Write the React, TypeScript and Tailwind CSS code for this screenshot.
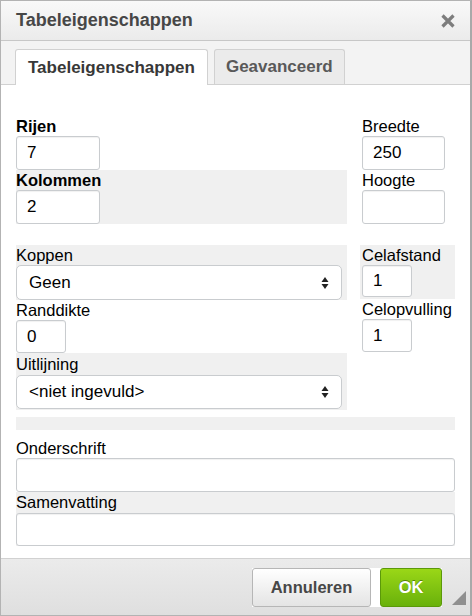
import { FC } from "react";

const Label: FC<{ text: string; bold?: boolean; className?: string }> = ({
  text,
  bold,
  className = "h-[20px] leading-[20px]",
}) => (
  <div className={`${className} text-[16.5px] text-black ${bold ? "font-bold" : ""}`}>
    {text}
  </div>
);

const TextBox: FC<{ value?: string; className: string }> = ({ value = "", className }) => (
  <input
    readOnly
    value={value}
    className={`${className} block rounded-[3px] border border-[#c9cccf] bg-white pl-[10px] text-[17px] text-black shadow-[inset_0_1px_1px_rgba(0,0,0,0.06)] outline-none`}
  />
);

const SelectBox: FC<{ value: string; className: string }> = ({ value, className }) => (
  <div
    className={`${className} flex w-[326px] items-center justify-between rounded-[5px] border border-[#c9cccf] bg-white pl-[12px] pr-[12px] text-[17px] text-black`}
  >
    <span>{value}</span>
    <svg width="8" height="14" viewBox="0 0 8 14">
      <polygon points="4,1 7.5,6 0.5,6" fill="#222" />
      <polygon points="0.5,8 7.5,8 4,13" fill="#222" />
    </svg>
  </div>
);

export default function App() {
  return (
    <div className="flex h-[616px] w-[472px] flex-col border border-[#b3b3b3] border-r-2 border-r-[#a9a9a9] bg-white font-['Liberation_Sans',Arial,sans-serif]">
      {/* title bar */}
      <div className="flex h-[40px] items-center justify-between border-b border-[#c7c7c7] bg-gradient-to-b from-[#f9f9f9] to-[#ebebeb] pl-[15px] pr-[14px]">
        <span className="text-[18px] font-bold text-[#474747]">Tabeleigenschappen</span>
        <svg width="16" height="16" viewBox="0 0 16 16">
          <path d="M2.5 2.5 L13.5 13.5 M13.5 2.5 L2.5 13.5" stroke="#7d7d7d" strokeWidth="3.2" />
        </svg>
      </div>

      {/* tabs */}
      <div className="flex h-[44px] items-end gap-[6px] border-b border-[#d1d1d1] bg-[#f3f3f3] pl-[14px]">
        <div className="-mb-px flex h-[36px] items-center rounded-t-[3px] border border-b-0 border-[#d1d1d1] bg-white px-[12px] text-[17px] font-bold text-[#383838]">
          Tabeleigenschappen
        </div>
        <div className="flex h-[35px] items-center rounded-t-[3px] border border-b-0 border-[#d1d1d1] bg-[#ebebeb] px-[11px] text-[17px] font-bold text-[#595959]">
          Geavanceerd
        </div>
      </div>

      {/* content */}
      <div className="flex-1 px-[15px] pt-[31px]">
        <div className="grid grid-cols-[331px_1fr] gap-x-[13px]">
          <div className="flex flex-col">
            <Label text="Rijen" bold />
            <TextBox value="7" className="h-[34px] w-[84px]" />
            <div className="bg-[#f0f0f0]">
              <Label text="Kolommen" bold />
              <TextBox value="2" className="h-[34px] w-[84px]" />
            </div>
          </div>
          <div className="flex flex-col px-[2px]">
            <Label text="Breedte" />
            <TextBox value="250" className="h-[34px] w-[83px]" />
            <Label text="Hoogte" />
            <TextBox className="h-[34px] w-[83px]" />
          </div>
        </div>

        <div className="mt-[21px] grid grid-cols-[331px_1fr] gap-x-[13px]">
          <div className="flex flex-col">
            <div className="bg-[#f0f0f0]">
              <Label text="Koppen" />
              <SelectBox value="Geen" className="h-[35px]" />
            </div>
            <Label text="Randdikte" />
            <TextBox value="0" className="h-[33px] w-[50px]" />
            <div className="bg-[#f0f0f0] pb-[1px]">
              <Label text="Uitlijning" className="h-[22px] leading-[22px]" />
              <SelectBox value="<niet ingevuld>" className="h-[34px]" />
            </div>
          </div>
          <div className="flex flex-col">
            <div className="bg-[#f0f0f0] px-[2px] pb-[2px]">
              <Label text="Celafstand" />
              <TextBox value="1" className="h-[32px] w-[50px]" />
            </div>
            <div className="px-[2px]">
              <Label text="Celopvulling" />
              <TextBox value="1" className="h-[33px] w-[50px]" />
            </div>
          </div>
        </div>

        <div className="mt-[7px] h-[13px] bg-[#f0f0f0]" />
        <Label text="Onderschrift" className="h-[28px] pt-[8px] leading-[20px]" />
        <TextBox className="h-[34px] w-full" />
        <div className="bg-[#f0f0f0]">
          <Label text="Samenvatting" className="h-[21px] leading-[21px]" />
          <TextBox className="h-[33px] w-full" />
        </div>
      </div>

      {/* footer */}
      <div className="relative flex h-[57px] items-start justify-end border-t border-[#d1d1d1] bg-gradient-to-b from-[#ebebeb] to-[#dfdfdf] pr-[28px] pt-[9px]">
        <div className="flex gap-[9px] bg-white">
          <button className="h-[39px] w-[119px] rounded-[3px] border border-[#b6b6b6] bg-gradient-to-b from-white to-[#e4e4e4] text-[16.5px] font-bold text-[#474747]">
            Annuleren
          </button>
          <button className="h-[39px] w-[62px] rounded-[3px] border border-[#5b9909] bg-gradient-to-b from-[#9ad717] to-[#69b10b] text-[16.5px] font-bold text-white [text-shadow:0_-1px_0_#55830c]">
            OK
          </button>
        </div>
        <svg width="14" height="14" viewBox="0 0 14 14" className="absolute bottom-[10px] right-[4px]">
          <polygon points="14,0 14,14 0,14" fill="#8f8f8f" />
        </svg>
      </div>
    </div>
  );
}
